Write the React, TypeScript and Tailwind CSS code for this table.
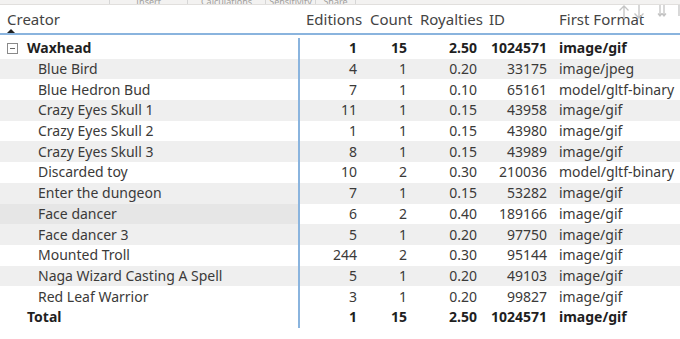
import React from "react";

interface Row {
  name: string;
  editions: number;
  count: number;
  royalties: string;
  id: number;
  format: string;
}

const rows: Row[] = [
  { name: "Blue Bird", editions: 4, count: 1, royalties: "0.20", id: 33175, format: "image/jpeg" },
  { name: "Blue Hedron Bud", editions: 7, count: 1, royalties: "0.10", id: 65161, format: "model/gltf-binary" },
  { name: "Crazy Eyes Skull 1", editions: 11, count: 1, royalties: "0.15", id: 43958, format: "image/gif" },
  { name: "Crazy Eyes Skull 2", editions: 1, count: 1, royalties: "0.15", id: 43980, format: "image/gif" },
  { name: "Crazy Eyes Skull 3", editions: 8, count: 1, royalties: "0.15", id: 43989, format: "image/gif" },
  { name: "Discarded toy", editions: 10, count: 2, royalties: "0.30", id: 210036, format: "model/gltf-binary" },
  { name: "Enter the dungeon", editions: 7, count: 1, royalties: "0.15", id: 53282, format: "image/gif" },
  { name: "Face dancer", editions: 6, count: 2, royalties: "0.40", id: 189166, format: "image/gif" },
  { name: "Face dancer 3", editions: 5, count: 1, royalties: "0.20", id: 97750, format: "image/gif" },
  { name: "Mounted Troll", editions: 244, count: 2, royalties: "0.30", id: 95144, format: "image/gif" },
  { name: "Naga Wizard Casting A Spell", editions: 5, count: 1, royalties: "0.20", id: 49103, format: "image/gif" },
  { name: "Red Leaf Warrior", editions: 3, count: 1, royalties: "0.20", id: 99827, format: "image/gif" },
];

const grid = "grid grid-cols-[300px_63px_50px_69px_70px_1fr] h-[20.7px] items-center";

function TotalRow({ label, indent }: { label: React.ReactNode; indent: string }) {
  return (
    <div className={grid + " font-bold text-[#1f1f1f]"}>
      <div className={"flex items-center border-r-2 border-[#8ab4de] h-full " + indent}>{label}</div>
      <div className="text-right pr-[6px]">1</div>
      <div className="text-right pr-[6px]">15</div>
      <div className="text-right pr-[5px]">2.50</div>
      <div className="text-right pr-[5px]">1024571</div>
      <div className="pl-[7px]">image/gif</div>
    </div>
  );
}

export default function App() {
  return (
    <div className="w-[680px] h-[339px] bg-white relative overflow-hidden text-[14px] leading-none" style={{ fontFamily: '"Segoe UI", "Noto Sans", sans-serif' }}>
      {/* ribbon strip cut off at top */}
      <div className="h-[5px] bg-[#f3f2f1] border-b border-[#e1dfdd] flex overflow-hidden text-[9px] text-[#a19f9d] leading-[4px]">
        <div className="w-[110px] border-r border-[#d6d6d6]" />
        <div className="w-[78px] border-r border-[#d6d6d6] text-center">Insert</div>
        <div className="w-[78px] border-r border-[#d6d6d6] text-center">Calculations</div>
        <div className="w-[50px] border-r border-[#d6d6d6] text-center">Sensitivity</div>
        <div className="w-[40px] border-r border-[#d6d6d6] text-center">Share</div>
      </div>

      {/* header */}
      <div className="grid grid-cols-[300px_63px_50px_69px_70px_1fr] h-[30px] border-b-2 border-[#8ab4de] text-[15px] text-[#444]">
        <div className="pl-[7px] pt-[7px] relative">
          Creator
          <div className="absolute left-[7px] top-[24px] w-0 h-0 border-l-[4px] border-r-[4px] border-b-[4px] border-l-transparent border-r-transparent border-b-[#222]" />
        </div>
        <div className="pl-[6px] pt-[7px]">Editions</div>
        <div className="pl-[7px] pt-[7px]">Count</div>
        <div className="pl-[7px] pt-[7px]">Royalties</div>
        <div className="pl-[7px] pt-[7px]">ID</div>
        <div className="pl-[7px] pt-[7px]">First Format</div>
      </div>

      {/* sort / drill icons over header */}
      <svg className="absolute top-[4px] left-[618px]" width="62" height="16" viewBox="0 0 62 16" fill="none" stroke="#c4c4c4" strokeWidth="1.3">
        <path d="M6 15V2M1.5 6.5L6 2l4.5 4.5" />
        <path d="M21 1v13M16.5 9.5L21 14l4.5-4.5" />
        <path d="M42 1v11M46 1v11M40 9.5l2 2.5 2-2.5M44 9.5l2 2.5 2-2.5" />
        <path d="M61 1v11" />
      </svg>

      <div className="pt-[3px]">
        <TotalRow
          indent="pl-[7px]"
          label={
            <>
              <span className="w-[11px] h-[11px] border border-[#8a8a8a] flex items-center justify-center mr-[9px]">
                <span className="w-[5px] h-px bg-[#666]" />
              </span>
              Waxhead
            </>
          }
        />
        {rows.map((r, i) => (
          <div key={r.name} className={grid + " text-[#3b3a39] " + (i % 2 === 0 ? "bg-[#efefef]" : "bg-white")}>
            <div className={"pl-[38px] h-full flex items-center border-r-2 border-[#8ab4de] " + (r.name === "Face dancer" ? "bg-[#e6e6e6]" : "")}>{r.name}</div>
            <div className="text-right pr-[6px]">{r.editions}</div>
            <div className="text-right pr-[6px]">{r.count}</div>
            <div className="text-right pr-[5px]">{r.royalties}</div>
            <div className="text-right pr-[5px]">{r.id}</div>
            <div className="pl-[7px] whitespace-nowrap">{r.format}</div>
          </div>
        ))}
        <TotalRow indent="pl-[27px]" label="Total" />
      </div>
    </div>
  );
}
